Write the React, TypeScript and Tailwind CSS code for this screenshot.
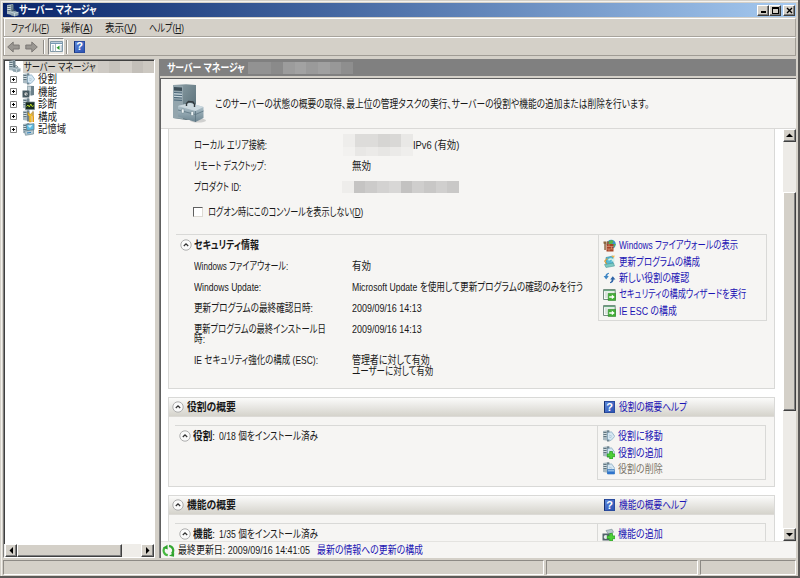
import { useLayoutEffect, useRef, useState } from "react";
import type { ReactNode } from "react";
import clsx from "clsx";

// Squeezes a run of text into a given width, like a condensed UI font.
function Label({
  children,
  w,
  className,
}: {
  children: ReactNode;
  w: number;
  className?: string;
}) {
  const ref = useRef<HTMLSpanElement>(null);
  const [scale, setScale] = useState(1);

  useLayoutEffect(() => {
    if (ref.current && ref.current.offsetWidth > 0) {
      setScale(w / ref.current.offsetWidth);
    }
  }, [w, children]);

  return (
    <span
      className={clsx("block h-[14px] shrink-0 leading-[14px]", className)}
      style={{ width: w }}
    >
      <span
        ref={ref}
        className="inline-block origin-left whitespace-nowrap"
        style={{ transform: `scaleX(${scale})` }}
      >
        {children}
      </span>
    </span>
  );
}

function Server() {
  return (
    <>
      <path d="M1 1l6-1v11l-6-1z" fill="#a9b9c1" />
      <path d="M5 .5h2.5v11H5z" fill="#6f838d" />
      <path d="M1.5 2.5h3M1.5 4.5h3M1.5 6.5h3" stroke="#4e626d" strokeWidth=".8" />
      <path d="M1.5 3.5h3M1.5 5.5h3" stroke="#e8f1f4" strokeWidth=".7" />
    </>
  );
}

function Plus() {
  return (
    <path
      d="M7.700 5.500h2.800v2.400h2.400v2.800h-2.400V13H7.700v-2.300H5.300V7.900h2.400z"
      fill="#4fd038"
      stroke="#1f9a1b"
      strokeWidth=".7"
    />
  );
}

function Icon({ name, className }: { name: string; className?: string }) {
  return (
    <svg viewBox="0 0 13 13" className={clsx("size-[13px] shrink-0", className)}>
      {name === "server" && (
        <>
          <Server />
          <path d="M4.5 7.5l4-.8 4 1.6v3l-4 1.2-4-1.7z" fill="#8fa4ae" />
          <path d="M4.5 8l4 1.2 4-1M8.5 9.2v3" stroke="#e3edf1" strokeWidth=".6" fill="none" />
          <path d="M6.5 7.2V6l2-.3L10 7" stroke="#435761" strokeWidth=".7" fill="none" />
        </>
      )}
      {(name === "role" || name === "roleAdd" || name === "roleRemove") && (
        <>
          <Server />
          <path d="M5.5 2.8L9.500 1.800l3.300 4.500L9 10.5l-3.5-1z" fill="#d5e7f2" stroke="#83a5bd" strokeWidth=".7" />
          <path d="M7 5l3 1.3M7 7l2.4.8" stroke="#9db9cb" strokeWidth=".6" />
        </>
      )}
      {name === "roleAdd" && <Plus />}
      {name === "roleRemove" && (
        <>
          <path d="M5.500 7.500h7V12h-7z" fill="#8db9e4" stroke="#2a6bb5" strokeWidth=".6" />
          <path d="M5.5 9.500h7V12h-7z" fill="#2f74cc" />
        </>
      )}
      {name === "feature" && (
        <>
          <path d="M5 .5l7 .5v9l-7 1z" fill="#9fb0b7" />
          <path d="M9 1v9.5l3-.5V1z" fill="#6c818b" />
          <path d="M6 3h3M6 5h3" stroke="#e7eff2" />
          <path d="M.5 5.5h6.8v7H.5z" fill="#485b64" />
          <circle cx="4" cy="9" r="2" fill="#e6ebed" stroke="#1e2b31" strokeWidth=".6" />
          <path d="M4 8v1.2l1 .5" stroke="#222" strokeWidth=".5" fill="none" />
        </>
      )}
      {name === "featureAdd" && (
        <>
          <path d="M4 2.5l6-1.3 1.5 3-5 2z" fill="#bac8cd" stroke="#758992" strokeWidth=".6" />
          <path d="M.5 5.5h7v7h-7z" fill="#52636a" />
          <circle cx="3.7" cy="9" r="2" fill="#e5eaec" />
          <Plus />
        </>
      )}
      {name === "diag" && (
        <>
          <Server />
          <path d="M3.5 4h9v7.5h-9z" fill="#182c20" stroke="#70838b" strokeWidth=".7" />
          <path d="M4.5 8.5L6 7l1.3 2 1.5-3 1.2 2.5 1.8-.8" stroke="#bedf22" strokeWidth=".9" fill="none" />
        </>
      )}
      {name === "config" && (
        <>
          <Server />
          <path d="M6 2.2v3l1.3 1V12h2V6.2l1-1v-3L9.2 4h-2z" fill="#f5c22e" stroke="#b9820b" strokeWidth=".5" />
          <path d="M11 1.5v5M11.2 6.5v5.5" stroke="#e59c13" strokeWidth="1.6" />
          <path d="M11 .5v5" stroke="#9aa5a9" strokeWidth=".8" />
        </>
      )}
      {name === "storage" && (
        <>
          <Server />
          <path d="M4 1.5l8-.8v6L5 7.5z" fill="#5dbbe2" stroke="#63808e" strokeWidth=".8" />
          <path d="M5.5 2.5l5-.5L8 5z" fill="#d4f1fb" />
          <path d="M2.5 8l9-1v4l-8 1.3z" fill="#b8cbd3" stroke="#5c7c8c" strokeWidth=".6" />
          <path d="M5 10l4-.6" stroke="#2b7dbb" />
        </>
      )}
      {name === "firewall" && (
        <>
          <circle cx="8.3" cy="5.2" r="4.5" fill="#3a94cb" />
          <path d="M6 2l3-1 1.5 1.5L9 5H6zM10 5l2.5 0-1 3z" fill="#55b44c" />
          <path d="M3.5 5h7v7.5h-7z" fill="#a64426" />
          <path d="M3.5 7.5h7M3.5 10h7M6 5v2.5M8.5 7.5V10M6 10v2.5" stroke="#e0a68b" strokeWidth=".6" />
          <path d="M.5 2.5h3v2L2.8 5v6H1.3V5L.5 4.5zM4.2 2l2 1-.7 2H3.7z" fill="#8b6540" />
        </>
      )}
      {name === "update" && (
        <>
          <path d="M3 2.5l7-1.5v8.5L3 11z" fill="#58b9d3" stroke="#2a89a5" strokeWidth=".6" />
          <path d="M5 4.5C7 2.5 9 3 10.5 4l1-1.3v4l-3.5-.5 1.3-1C8 4.5 6.8 5 6 6z" fill="#d8f2e8" />
          <path d="M4.5 3.3L1.7 6 4 9.5" stroke="#df9c32" fill="none" strokeWidth="1.1" />
          <path d="M1.5 9.5l9-1.5 1 3L3 12.5z" fill="#7dc9c2" stroke="#438f91" strokeWidth=".5" />
          <path d="M8 1l3.7-.4L11 3z" fill="#f0b348" />
        </>
      )}
      {name === "recheck" && (
        <>
          <path d="M6 1.800C3.500 2 2.400 3.600 2.400 5H.6l2.600 3.400L5.800 5H4.300c0-1 .6-1.900 1.700-2.200z" fill="#3f86c4" />
          <path d="M7 12.200c2.500-.2 3.600-1.800 3.600-3.700h1.800L9.800 5.200 7.200 8.500h1.500c0 1.300-.6 2.400-1.700 2.700z" fill="#2c62a6" />
        </>
      )}
      {name === "wizard" && (
        <>
          <path d="M.5 1.5h11.7v10H.5z" fill="#f7f9f8" stroke="#758d80" />
          <path d="M1 2.5h11" stroke="#6aa67f" strokeWidth="1.3" />
          <path d="M2 5h2.5M2 7h2.5M2 9h2.5" stroke="#a9bab0" strokeWidth=".7" />
          <path d="M5.2 5.3h7.5v7.2H5.2z" fill="#43ae36" stroke="#237b20" strokeWidth=".5" />
          <path d="M6.2 8.2h2.6V6.5l2.9 2.4-2.9 2.4V9.7H6.2z" fill="#fff" />
        </>
      )}
      {name === "refresh" && (
        <>
          <path d="M5.8 11.2A4.7 4.7 0 0 1 3 3.2" stroke="#45b83e" strokeWidth="2.2" fill="none" />
          <path d="M7 1.8a4.7 4.7 0 0 1 2.8 8" stroke="#35a832" strokeWidth="2.2" fill="none" />
          <path d="M1 3.8L5.5.8l.2 4.6zM12.2 8.8l-.2 4-5-1z" fill="#2fa22c" />
        </>
      )}
    </svg>
  );
}

function HelpIcon() {
  return (
    <span className="flex h-[12px] w-[11px] shrink-0 items-center justify-center border border-[#2a4b9e] border-l-[#16306f] bg-linear-to-br from-[#5c85d8] to-[#2d52b4] text-[11px] leading-none font-bold text-white">
      ?
    </span>
  );
}

function Chevron() {
  return (
    <svg viewBox="0 0 12 12" className="size-3 shrink-0">
      <circle cx="6" cy="6" r="5.2" fill="#fafafa" stroke="#a5a5a5" strokeWidth=".9" />
      <path d="M3.8 7L6 4.9 8.2 7" stroke="#333" strokeWidth="1.3" fill="none" />
    </svg>
  );
}

function Toolbox() {
  return (
    <svg viewBox="0 0 34 40" className="h-10 w-[34px] shrink-0">
      <defs>
        <linearGradient id="tower" x1="0" x2="1" y1="0" y2="1">
          <stop offset="0" stopColor="#8fa2a9" />
          <stop offset="1" stopColor="#536972" />
        </linearGradient>
        <linearGradient id="box" x1="0" x2="0" y1="0" y2="1">
          <stop offset="0" stopColor="#bccdd5" />
          <stop offset="1" stopColor="#6d8591" />
        </linearGradient>
      </defs>
      <path d="M1 1l13-.8L24 1v34l-10 1-13-2z" fill="url(#tower)" />
      <path d="M1 1l10 1v33L1 34z" fill="#93a5ad" />
      <path d="M2 3l8 .6V7L2 6.5z" fill="#3c4e58" />
      <path d="M2 8.5l8 .5M2 11l8 .5M2 13.500l8 .5M2 16l8 .5" stroke="#4b6779" strokeWidth="1.2" />
      <path d="M2 9.800l8 .5M2 12.300l8 .5" stroke="#dceaf0" strokeWidth=".8" />
      <ellipse cx="26" cy="36.500" rx="8" ry="2" fill="#b5b5b5" opacity=".6" />
      <path d="M6 22l12-3 13.500 4v11L23.500 38 6 32.500z" fill="url(#box)" />
      <path d="M6 22l12-3 13.500 4-8 4z" fill="#ccd9df" />
      <path d="M6 26l17.500 4.500 8-3.500M23.500 27v11" stroke="#5c7480" strokeWidth=".8" fill="none" />
      <path d="M9.500 25h2.500v4H9.500zM19 27.500h2.500v4H19z" fill="#edf3f5" stroke="#6f858f" strokeWidth=".5" />
      <path d="M14.500 22v-2.500l2-2 4.500.5 1.500 2.500V23" stroke="#323a3e" strokeWidth="1.400" fill="none" />
    </svg>
  );
}

const raised =
  "border border-t-white border-l-white border-r-[#404040] border-b-[#404040] bg-[#d4d0c8] shadow-[inset_-1px_-1px_0_#808080]";

function ScrollButton({ d, className }: { d: string; className: string }) {
  return (
    <div className={clsx("flex shrink-0 items-center justify-center", raised, className)}>
      <svg viewBox="0 0 7 7" className="size-[7px]">
        <path d={d} fill="#000" />
      </svg>
    </div>
  );
}

function Mosaic({ cells, className }: { cells: string[]; className: string }) {
  return (
    <div className={clsx("flex shrink-0", className)}>
      {cells.map((cell, index) => (
        <div className={clsx("h-full flex-1", cell)} key={index} />
      ))}
    </div>
  );
}

const menus = [
  { text: "ファイル", key: "F", w: 38 },
  { text: "操作", key: "A", w: 32 },
  { text: "表示", key: "V", w: 32 },
  { text: "ヘルプ", key: "H", w: 35 },
];

const tree = [
  { icon: "role", text: "役割", w: 19 },
  { icon: "feature", text: "機能", w: 19 },
  { icon: "diag", text: "診断", w: 19 },
  { icon: "config", text: "構成", w: 19 },
  { icon: "storage", text: "記憶域", w: 28 },
];

type LinkItem = { icon: string; text: string; w: number; disabled?: boolean };

const securityLinks: LinkItem[] = [
  { icon: "firewall", text: "Windows ファイアウォールの表示", w: 119 },
  { icon: "update", text: "更新プログラムの構成", w: 81 },
  { icon: "recheck", text: "新しい役割の確認", w: 70 },
  { icon: "wizard", text: "セキュリティの構成ウィザードを実行", w: 127 },
  { icon: "wizard", text: "IE ESC の構成", w: 58 },
];

const roleLinks: LinkItem[] = [
  { icon: "role", text: "役割に移動", w: 45 },
  { icon: "roleAdd", text: "役割の追加", w: 45 },
  { icon: "roleRemove", text: "役割の削除", w: 45, disabled: true },
];

const featureLinks: LinkItem[] = [{ icon: "featureAdd", text: "機能の追加", w: 45 }];

function LinkBox({ links, className }: { links: LinkItem[]; className: string }) {
  return (
    <div
      className={clsx(
        "w-[169px] shrink-0 border border-[#d9d9d7] pt-[2px] pl-[4px]",
        className,
      )}
    >
      {links.map((link) => (
        <div className="flex h-[16.4px] items-center gap-[3px]" key={link.text}>
          <Icon name={link.icon} />
          <Label w={link.w} className={link.disabled ? "text-[#7c766a]" : "text-[#1c14b4]"}>
            {link.text}
          </Label>
        </div>
      ))}
    </div>
  );
}

function Field({
  label,
  w,
  children,
}: {
  label: string;
  w: number;
  children: ReactNode;
}) {
  return (
    <div className="flex h-[21px] items-center">
      <div className="w-[158px] shrink-0">
        <Label w={w}>{label}</Label>
      </div>
      {children}
    </div>
  );
}

function SectionHeader({
  title,
  help,
}: {
  title: string;
  help: string;
}) {
  return (
    <div className="flex h-[19px] items-center border-b border-[#dcdad6] bg-linear-to-b from-[#fbfbfa] to-[#d5d3cc] pl-[3px]">
      <Chevron />
      <Label w={49} className="ml-[3px] font-bold">
        {title}
      </Label>
      <div className="ml-[368px] flex items-center gap-[4px]">
        <HelpIcon />
        <Label w={68} className="text-[#1c14b4]">
          {help}
        </Label>
      </div>
    </div>
  );
}

function Summary({ title, text }: { title: string; text: string }) {
  return (
    <div className="flex h-[21px] w-[422px] items-center border-t border-[#d9d9d7] pl-[4px]">
      <Chevron />
      <Label w={22} className="ml-[2px] font-bold">
        {title}
        <span className="font-normal">:</span>
      </Label>
      <Label w={99} className="ml-[4px]">
        {text}
      </Label>
    </div>
  );
}

function TreePane() {
  return (
    <div className="flex w-[152px] shrink-0 flex-col border border-t-[#808080] border-r-white border-b-white border-l-[#808080] bg-white shadow-[inset_1px_1px_0_#404040]">
      <div className="flex h-[13px] items-center pl-[4px]">
        <Icon name="server" />
        <div className="ml-[2px] flex h-[12px] flex-1 items-center bg-[#d4d0c8] pl-px">
          <Label w={72}>サーバー マネージャ</Label>
          <Mosaic
            className="ml-[2px] h-[12px] w-[56px]"
            cells={["bg-[#cecac4]", "bg-[#c6c2bb]", "bg-[#d2cec8]", "bg-[#c3bfb9]", "bg-[#ccc8c1]"]}
          />
        </div>
      </div>
      {tree.map((item) => (
        <div className="flex h-[12.5px] items-center pl-[6px]" key={item.text}>
          <svg viewBox="0 0 7 7" className="size-[7px] shrink-0">
            <path d="M.5.5h6v6h-6z" fill="#fff" stroke="#808080" />
            <path d="M2 3.500h3M3.500 2v3" stroke="#000" />
          </svg>
          <Icon name={item.icon} className="ml-[5px]" />
          <Label w={item.w} className="ml-[3px]">
            {item.text}
          </Label>
        </div>
      ))}
      <div className="mt-auto flex h-[13px] bg-[#efede9]">
        <ScrollButton d="M5 0v7L1.500 3.500z" className="ml-px h-[13px] w-[12px]" />
        <div className={clsx("h-[13px] w-[105px]", raised)} />
        <ScrollButton d="M2 0v7L5.500 3.500z" className="ml-auto h-[13px] w-[13px]" />
      </div>
    </div>
  );
}

function ServerSummary() {
  return (
    <div className="h-[260px] shrink-0 border-x border-b border-[#d9d9d7] bg-[#f6f5f3] pt-[5px]">
      <div className="pl-[25px]">
        <Field label="ローカル エリア接続:" w={73}>
          <div className="-ml-[9px] h-[22px] w-[70px]">
            <Mosaic
              className="h-[13px]"
              cells={["bg-[#eeedeb]", "bg-[#dddcda]", "bg-[#dddcda]", "bg-[#d6d5d3]", "bg-[#d9d8d6]", "bg-[#e9e8e6]"]}
            />
            <Mosaic
              className="h-[9px]"
              cells={["bg-[#f2f1ef]", "bg-[#e8e7e5]", "bg-[#ebeae8]", "bg-[#e7e6e4]", "bg-[#ebeae8]", "bg-[#efeeec]"]}
            />
          </div>
          <Label w={46}>IPv6 (有効)</Label>
        </Field>
        <Field label="リモート デスクトップ:" w={72}>
          <Label w={19}>無効</Label>
        </Field>
        <Field label="プロダクト ID:" w={47}>
          <Mosaic
            className="-ml-[10px] h-[12px] w-[117px]"
            cells={[
              "bg-[#eeedeb]",
              "bg-[#c5c4c3]",
              "bg-[#cccbca]",
              "bg-[#d3d2d1]",
              "bg-[#d8d7d6]",
              "bg-[#c3c2c1]",
              "bg-[#cfcecd]",
              "bg-[#c8c7c6]",
              "bg-[#d0cfce]",
              "bg-[#c9c8c7]",
            ]}
          />
        </Field>
        <div className="flex h-[29px] items-center">
          <div className="mr-[5px] -ml-px size-[10px] border border-t-[#606060] border-r-[#dddad4] border-b-[#dddad4] border-l-[#606060] bg-white" />
          <Label w={155}>
            ログオン時にこのコンソールを表示しない(<u>D</u>)
          </Label>
        </div>
      </div>
      <div className="mt-[8px] flex pl-[7px]">
        <div className="w-[422px] border-t border-[#d9d9d7]">
          <div className="flex h-[20px] items-center pl-[4px]">
            <Chevron />
            <Label w={65} className="ml-[2px] font-bold">
              セキュリティ情報
            </Label>
          </div>
          <div className="pl-[18px]">
            <Field label="Windows ファイアウォール:" w={94}>
              <Label w={19}>有効</Label>
            </Field>
            <Field label="Windows Update:" w={67}>
              <Label w={231}>Microsoft Update を使用して更新プログラムの確認のみを行う</Label>
            </Field>
            <Field label="更新プログラムの最終確認日時:" w={119}>
              <Label w={70}>2009/09/16 14:13</Label>
            </Field>
            <Field label="更新プログラムの最終インストール日" w={132}>
              <Label w={70}>2009/09/16 14:13</Label>
            </Field>
            <div className="-mt-[7px] h-[17px]">
              <Label w={11}>時:</Label>
            </div>
            <Field label="IE セキュリティ強化の構成 (ESC):" w={124}>
              <Label w={78}>管理者に対して有効</Label>
            </Field>
            <div className="-mt-[6px] ml-[158px]">
              <Label w={81}>ユーザーに対して有効</Label>
            </div>
          </div>
        </div>
        <LinkBox links={securityLinks} className="h-[87px]" />
      </div>
    </div>
  );
}

function Details() {
  return (
    <div className="flex min-w-0 flex-1 flex-col border-l border-[#808080] bg-[#f6f5f3]">
      <div className="flex h-[17px] shrink-0 items-center bg-[#808080] pl-[7px] text-white">
        <Label w={78} className="font-bold">
          サーバー マネージャ
        </Label>
        <Mosaic
          className="ml-[3px] h-[12px] w-[105px]"
          cells={[
            "bg-[#929292]",
            "bg-[#929292]",
            "bg-[#8a8a8a]",
            "bg-[#9c9c9c]",
            "bg-[#a2a2a2]",
            "bg-[#9a9a9a]",
            "bg-[#a0a0a0]",
            "bg-[#989898]",
            "bg-[#8e8e8e]",
          ]}
        />
      </div>
      <div className="h-[3px] shrink-0 border-b border-[#606060] bg-[#d4d0c8]" />
      <div className="flex min-h-0 flex-1 flex-col border-l border-[#606060]">
        <div className="flex h-[50px] shrink-0 items-center border-b border-[#dad9d7] pl-[11px]">
          <Toolbox />
          <Label w={434} className="ml-[9px]">
            このサーバーの状態の概要の取得、最上位の管理タスクの実行、サーバーの役割や機能の追加または削除を行います。
          </Label>
        </div>
        <div className="flex h-[412px] shrink-0 overflow-hidden bg-white">
          <div className="ml-[7px] flex w-[607px] shrink-0 flex-col gap-[8px]">
            <ServerSummary />
            <div className="h-[90px] shrink-0 border border-[#d9d9d7] bg-[#f6f5f3]">
              <SectionHeader title="役割の概要" help="役割の概要ヘルプ" />
              <div className="mt-[8px] flex pl-[6px]">
                <Summary title="役割" text="0/18 個をインストール済み" />
                <LinkBox links={roleLinks} className="h-[55px]" />
              </div>
            </div>
            <div className="h-[90px] shrink-0 border border-[#d9d9d7] bg-[#f6f5f3]">
              <SectionHeader title="機能の概要" help="機能の概要ヘルプ" />
              <div className="mt-[8px] flex pl-[6px]">
                <Summary title="機能" text="1/35 個をインストール済み" />
                <LinkBox links={featureLinks} className="h-[55px]" />
              </div>
            </div>
          </div>
          <div className="ml-auto flex w-[13px] flex-col bg-[#edebe7]">
            <ScrollButton d="M3.500 1.500L7 5H0z" className="h-[13px]" />
            <div className={clsx("mt-[50px] h-[219px]", raised)} />
            <ScrollButton d="M3.500 5.500L7 2H0z" className="mt-auto h-[13px]" />
          </div>
        </div>
        <div className="flex h-[17px] items-center border-t border-[#e4e3e0] pl-px">
          <Icon name="refresh" />
          <Label w={132} className="ml-[3px]">
            最終更新日: 2009/09/16 14:41:05
          </Label>
          <Label w={106} className="ml-[7px] text-[#1c14b4]">
            最新の情報への更新の構成
          </Label>
        </div>
      </div>
    </div>
  );
}

export default function App() {
  return (
    <div className="flex h-[578px] w-[800px] flex-col overflow-hidden border-r-2 border-b-2 border-[#5c5a58] bg-[#d4d0c8] pt-[3px] pr-[2px] pl-[3px] font-['Liberation_Sans','Noto_Sans_CJK_JP',sans-serif] text-[11px] text-[#181818] shadow-[inset_1px_1px_0_#d4d0c8,inset_2px_2px_0_#f4f2ee] [font-feature-settings:'palt']">
      <div className="flex h-[14px] shrink-0 items-center bg-linear-to-r from-[#0a246a] to-[#a6caf0] pl-[3px] text-white">
        <Icon name="server" />
        <Label w={78} className="font-bold">
          サーバー マネージャ
        </Label>
        <div className="mr-px ml-auto flex">
          <div className={clsx("flex h-[11px] w-[12px] items-end justify-center pb-[2px]", raised)}>
            <div className="h-[1.5px] w-[5px] bg-black" />
          </div>
          <div className={clsx("flex h-[11px] w-[12px] items-center justify-center", raised)}>
            <div className="h-[7px] w-[7px] border border-t-2 border-black" />
          </div>
          <div className={clsx("ml-[2px] flex h-[11px] w-[12px] items-center justify-center", raised)}>
            <svg viewBox="0 0 7 7" className="size-[7px]">
              <path d="M1 1l5 5M6 1L1 6" stroke="#000" strokeWidth="1.400" />
            </svg>
          </div>
        </div>
      </div>

      <div className="mt-px flex h-[19px] shrink-0 items-center gap-[12px] border border-[#a7a39c] border-t-white pl-[7px] shadow-[inset_1px_0_0_#fff]">
        {menus.map((menu) => (
          <Label w={menu.w} key={menu.key}>
            {menu.text}(<u>{menu.key}</u>)
          </Label>
        ))}
      </div>
      <div className="flex h-[19px] shrink-0 items-center border border-[#a09c95] border-t-white pl-[3px] shadow-[inset_1px_0_0_#fff]">
        <svg viewBox="0 0 13 12" className="h-3 w-[13px]">
          <path d="M.7 6l5.500-5v3h6v4h-6v3z" fill="#9a9792" stroke="#76736f" strokeWidth=".9" />
        </svg>
        <svg viewBox="0 0 13 12" className="ml-[5px] h-3 w-[13px]">
          <path d="M12.300 6l-5.500-5v3h-6v4h6v3z" fill="#9a9792" stroke="#76736f" strokeWidth=".9" />
        </svg>
        <div className="ml-[5px] h-[14px] w-[2px] border-l border-[#8f8c86] bg-white" />
        <div className="ml-[3px] flex h-[17px] w-[16px] items-center justify-center border border-t-[#808080] border-r-white border-b-white border-l-[#808080] bg-[#ebe8e3]">
          <svg viewBox="0 0 13 11" className="h-[11px] w-[13px]">
            <path d="M.5.5h12v10H.5z" fill="#fff" stroke="#8199a8" />
            <path d="M1 1.500h11v1.500H1z" fill="#7698b4" />
            <path d="M2 5h2M2 7h2M2 9h2M10.500 5h1.500M10.500 7h1.500M10.500 9h1.500" stroke="#8ba4b5" />
            <path d="M5.500 3v7.500" stroke="#a7b5bd" />
            <path d="M9.500 4.500v4.500L6.500 6.800z" fill="#279b2c" />
          </svg>
        </div>
        <div className="mr-[6px] ml-[2px] h-[14px] w-[2px] border-l border-[#8f8c86] bg-white" />
        <HelpIcon />
      </div>

      <div className="mt-[3px] flex h-[499px] shrink-0 gap-[4px]">
        <TreePane />
        <Details />
      </div>

      <div className="mt-[2px] flex h-[15px] shrink-0 gap-[2px]">
        <div className="w-[541px] border border-t-[#8d8a85] border-r-white border-b-white border-l-[#8d8a85]" />
        <div className="w-[152px] border border-t-[#8d8a85] border-r-white border-b-white border-l-[#8d8a85]" />
        <div className="flex-1 border border-t-[#8d8a85] border-r-white border-b-white border-l-[#8d8a85]" />
      </div>
    </div>
  );
}
